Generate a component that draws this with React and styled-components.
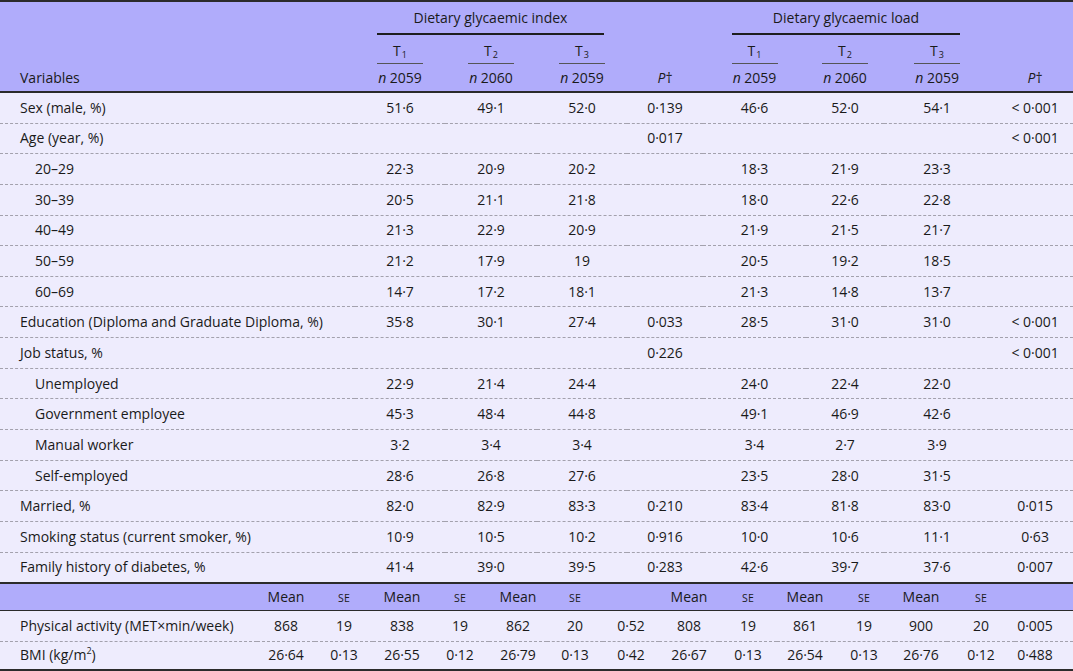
import React from 'react';
import styled, { createGlobalStyle } from 'styled-components';

const GlobalStyle = createGlobalStyle`
  html, body {
    margin: 0;
    padding: 0;
    background: #ffffff;
  }
  body {
    font-family: "Open Sans", "Noto Sans", sans-serif;
    font-size: 14px;
    color: #1a1a1a;
  }
`;

const Page = styled.div`
  width: 1073px;
`;

const Table = styled.table`
  width: 1073px;
  table-layout: fixed;
  border-collapse: separate;
  border-spacing: 0;
  background: #eeecfd;
  border-top: 2px solid #2b2b2b;
  border-bottom: ${p => (p.$last ? '2px solid #2b2b2b' : 'none')};
`;

const Head = styled.thead`
  background: #b0acfb;
`;

const Th = styled.th`
  padding: 0;
  font-weight: 400;
  text-align: ${p => p.$align || 'center'};
  vertical-align: bottom;
  padding-left: ${p => p.$pl || 0}px;
  padding-right: ${p => p.$pr || 0}px;
  border-bottom: ${p => (p.$rule ? '2px solid #2b2b2b' : 'none')};
`;

const GroupLabel = styled.div`
  line-height: 16px;
  padding: 8px 0 7px;
  margin: 0 ${p => p.$mr}px 0 ${p => p.$ml}px;
  border-bottom: 2px solid #1e1e1e;
`;

const TierLabel = styled.div`
  width: 46px;
  margin: 0 auto;
  line-height: 16px;
  padding: 8px 0 4px;
  border-bottom: 1px solid #555;
`;

const CountLabel = styled.div`
  line-height: 16px;
  padding: 6px 0 5px;
  white-space: nowrap;
`;

const Sub = styled.sub`
  font-size: 9px;
  line-height: 0;
  vertical-align: -2px;
  margin-left: 1px;
`;

const Row = styled.tr`
  & > td {
    border-bottom: ${p => (p.$lastRow ? 'none' : '1px dashed #a3a1ad')};
  }
`;

const Td = styled.td`
  height: ${p => p.$h || 29.65}px;
  padding: 0;
  padding-left: ${p => p.$pl || 0}px;
  padding-right: ${p => p.$pr || 0}px;
  text-align: center;
  vertical-align: middle;
  white-space: nowrap;
  line-height: 16px;
`;

const Label = styled(Td)`
  text-align: left;
  padding-left: ${p => (p.$indent ? 35 : 20)}px;
`;

const BandRow = styled.tr`
  background: #b0acfb;
  & > td {
    border-bottom: 1px solid #2b2b2b;
  }
`;

const SmallCaps = styled.span`
  font-size: 10.5px;
  letter-spacing: 0.3px;
`;

const Sup = styled.sup`
  font-size: 9px;
  line-height: 0;
`;

const topCols = [355, 90, 92, 90, 76, 103, 78, 106, 83];
const bottomCols = [257, 58, 58, 58, 58, 58, 56, 56, 60, 58, 56, 62, 52, 68, 58];

const rows = [
  ['Sex (male, %)', false, ['51·6', '49·1', '52·0', '0·139', '46·6', '52·0', '54·1', '< 0·001']],
  ['Age (year, %)', false, ['', '', '', '0·017', '', '', '', '< 0·001']],
  ['20–29', true, ['22·3', '20·9', '20·2', '', '18·3', '21·9', '23·3', '']],
  ['30–39', true, ['20·5', '21·1', '21·8', '', '18·0', '22·6', '22·8', '']],
  ['40–49', true, ['21·3', '22·9', '20·9', '', '21·9', '21·5', '21·7', '']],
  ['50–59', true, ['21·2', '17·9', '19', '', '20·5', '19·2', '18·5', '']],
  ['60–69', true, ['14·7', '17·2', '18·1', '', '21·3', '14·8', '13·7', '']],
  ['Education (Diploma and Graduate Diploma, %)', false, ['35·8', '30·1', '27·4', '0·033', '28·5', '31·0', '31·0', '< 0·001']],
  ['Job status, %', false, ['', '', '', '0·226', '', '', '', '< 0·001']],
  ['Unemployed', true, ['22·9', '21·4', '24·4', '', '24·0', '22·4', '22·0', '']],
  ['Government employee', true, ['45·3', '48·4', '44·8', '', '49·1', '46·9', '42·6', '']],
  ['Manual worker', true, ['3·2', '3·4', '3·4', '', '3·4', '2·7', '3·9', '']],
  ['Self-employed', true, ['28·6', '26·8', '27·6', '', '23·5', '28·0', '31·5', '']],
  ['Married, %', false, ['82·0', '82·9', '83·3', '0·210', '83·4', '81·8', '83·0', '0·015']],
  ['Smoking status (current smoker, %)', false, ['10·9', '10·5', '10·2', '0·916', '10·0', '10·6', '11·1', '0·63']],
  ['Family history of diabetes, %', false, ['41·4', '39·0', '39·5', '0·283', '42·6', '39·7', '37·6', '0·007']],
];

const meanRows = [
  ['Physical activity (MET×min/week)', ['868', '19', '838', '19', '862', '20', '0·52', '808', '19', '861', '19', '900', '20', '0·005'], 29.4],
  [<>BMI (kg/m<Sup>2</Sup>)</>, ['26·64', '0·13', '26·55', '0·12', '26·79', '0·13', '0·42', '26·67', '0·13', '26·54', '0·13', '26·76', '0·12', '0·488'], 27],
];

const Tier = ({ n }) => (
  <TierLabel>
    T<Sub>{n}</Sub>
  </TierLabel>
);

const Count = ({ n }) => (
  <CountLabel>
    <i>n</i> {n}
  </CountLabel>
);

const Pval = () => (
  <CountLabel>
    <i>P</i>†
  </CountLabel>
);

const MeanSeCells = ({ prefix }) =>
  [0, 1, 2].map(k => (
    <React.Fragment key={prefix + k}>
      <Td $h={26}>Mean</Td>
      <Td $h={26}><SmallCaps>SE</SmallCaps></Td>
    </React.Fragment>
  ));

export default function App() {
  return (
    <Page>
      <GlobalStyle />
      <Table>
        <colgroup>
          {topCols.map((w, i) => (
            <col key={i} style={{ width: w }} />
          ))}
        </colgroup>
        <Head>
          <tr>
            <Th />
            <Th colSpan={3}>
              <GroupLabel $ml={22} $mr={23}>Dietary glycaemic index</GroupLabel>
            </Th>
            <Th />
            <Th colSpan={3}>
              <GroupLabel $ml={29} $mr={30}>Dietary glycaemic load</GroupLabel>
            </Th>
            <Th />
          </tr>
          <tr>
            <Th />
            <Th><Tier n={1} /></Th>
            <Th><Tier n={2} /></Th>
            <Th><Tier n={3} /></Th>
            <Th />
            <Th><Tier n={1} /></Th>
            <Th><Tier n={2} /></Th>
            <Th><Tier n={3} /></Th>
            <Th />
          </tr>
          <tr>
            <Th $rule $align="left" $pl={20}><CountLabel>Variables</CountLabel></Th>
            <Th $rule><Count n="2059" /></Th>
            <Th $rule><Count n="2060" /></Th>
            <Th $rule><Count n="2059" /></Th>
            <Th $rule><Pval /></Th>
            <Th $rule><Count n="2059" /></Th>
            <Th $rule><Count n="2060" /></Th>
            <Th $rule><Count n="2059" /></Th>
            <Th $rule $pl={7}><Pval /></Th>
          </tr>
        </Head>
        <tbody>
          {rows.map(([label, indent, values], r) => (
            <Row key={r} $lastRow={r === rows.length - 1}>
              <Label $indent={indent}>{label}</Label>
              {values.map((v, i) => (
                <Td key={i} $pl={i === 7 ? 7 : 0}>{v}</Td>
              ))}
            </Row>
          ))}
        </tbody>
      </Table>
      <Table $last>
        <colgroup>
          {bottomCols.map((w, i) => (
            <col key={i} style={{ width: w }} />
          ))}
        </colgroup>
        <tbody>
          <BandRow>
            <Td $h={26} />
            <MeanSeCells prefix="a" />
            <Td $h={26} />
            <MeanSeCells prefix="b" />
            <Td $h={26} />
          </BandRow>
          {meanRows.map(([label, values, h], r) => (
            <Row key={r} $lastRow={r === meanRows.length - 1}>
              <Label $h={h}>{label}</Label>
              {values.map((v, i) => (
                <Td key={i} $h={h} $pr={i === 13 ? 18 : 0}>{v}</Td>
              ))}
            </Row>
          ))}
        </tbody>
      </Table>
    </Page>
  );
}
